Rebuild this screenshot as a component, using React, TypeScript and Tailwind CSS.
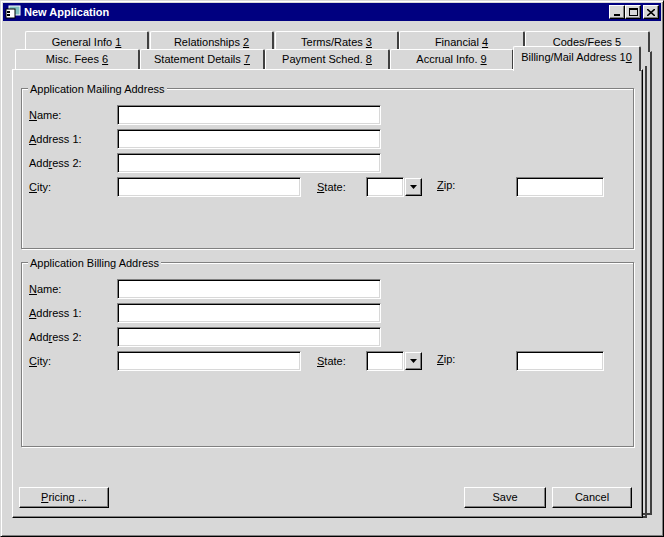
import React from "react";

const U = ({ c }: { c: string }) => <span className="underline">{c}</span>;

const sunken =
  "h-[20px] bg-white border-t border-l border-t-[#808080] border-l-[#808080] border-r border-b border-r-white border-b-white shadow-[inset_1px_1px_0_#000,inset_-1px_-1px_0_#d8d8d8]";
const raised =
  "bg-[#d8d8d8] border-t border-l border-t-white border-l-white border-r border-b border-r-black border-b-black shadow-[inset_-1px_-1px_0_#808080]";

function Tab({ x, y, w, h, children, sel }: { x: number; y: number; w: number; h: number; children: React.ReactNode; sel?: boolean }) {
  return (
    <div
      className={`absolute flex items-center justify-center bg-[#d8d8d8] border-t border-l border-white border-r-2 border-r-[#404040] rounded-tr-[2px] rounded-tl-[2px] ${sel ? "z-20 pb-[4px]" : "z-0"}`}
      style={{ left: x, top: y, width: w, height: h }}
    >
      <span>{children}</span>
    </div>
  );
}

function Row({ label }: { label: React.ReactNode }) {
  return (
    <div className="flex items-center h-[20px] mb-[4px]">
      <div className="w-[88px]">{label}</div>
      <div className={`${sunken} w-[264px]`} />
    </div>
  );
}

function Group({ title, h }: { title: string; h: number }) {
  return (
    <div className="relative mx-[8px] border border-[#808080] shadow-[1px_1px_0_#fff,inset_1px_1px_0_#fff]" style={{ height: h }}>
      <div className="absolute left-[6px] top-[-8px] bg-[#d8d8d8] px-[2px]">{title}</div>
      <div className="pt-[16px] pl-[7px]">
        <Row label={<><U c="N" />ame:</>} />
        <Row label={<><U c="A" />ddress 1:</>} />
        <Row label={<>Add<U c="r" />ess 2:</>} />
        <div className="flex items-center h-[20px]">
          <div className="w-[88px]"><U c="C" />ity:</div>
          <div className={`${sunken} w-[184px]`} />
          <div className="w-[49px] pl-[16px]"><U c="S" />tate:</div>
          <div className={`${sunken} w-[38px] ml-[16px]`} />
          <div className={`${raised} w-[17px] h-[18px] ml-[1px] flex items-center justify-center`}>
            <svg width="7" height="4" viewBox="0 0 7 4"><path d="M0 0h7L3.5 4z" fill="#000" /></svg>
          </div>
          <div className="w-[94px] pl-[15px] self-start"><U c="Z" />ip:</div>
          <div className={`${sunken} w-[88px]`} />
        </div>
      </div>
    </div>
  );
}

export default function App() {
  return (
    <div
      className="w-[664px] h-[537px] bg-[#d8d8d8] text-[11px] text-black border border-t-[#d8d8d8] border-l-[#d8d8d8] border-r-black border-b-black shadow-[inset_1px_1px_0_#fff,inset_-1px_-1px_0_#808080] p-[2px] flex flex-col"
      style={{ fontFamily: '"Liberation Sans", Arial, sans-serif' }}
    >
      <div className="h-[18px] bg-[#000080] flex items-center px-[2px] shrink-0">
        <svg width="16" height="14" viewBox="0 0 16 14" className="mr-[3px]">
          <rect x="4" y="1" width="11" height="9" fill="#80c0c0" stroke="#fff" strokeWidth="1" />
          <rect x="1" y="4" width="9" height="9" fill="#fff" stroke="#000" />
          <rect x="2" y="6" width="3" height="2" fill="#000" />
          <rect x="2" y="9" width="3" height="2" fill="#000" />
        </svg>
        <span className="text-white font-bold text-[11px] flex-1">New Application</span>
        {["min", "max", "x"].map((k) => (
          <div key={k} className={`${raised} w-[16px] h-[14px] flex items-center justify-center ${k === "x" ? "ml-[2px]" : ""}`}>
            {k === "min" && <div className="w-[6px] h-[2px] bg-black mt-[6px]" />}
            {k === "max" && <div className="w-[9px] h-[8px] border border-black border-t-2" />}
            {k === "x" && (
              <svg width="8" height="7" viewBox="0 0 8 7"><path d="M0 0L8 7M8 0L0 7" stroke="#000" strokeWidth="1.6" /></svg>
            )}
          </div>
        ))}
      </div>
      <div className="relative flex-1">
        <div className="absolute left-[20px] top-[30px] w-[629px] h-[464px] border-r-2 border-b-2 border-r-[#404040] border-b-[#404040] border-t border-white" />
        <div className="absolute left-[15px] top-[45px] w-[629px] h-[452px] border-r-2 border-b-2 border-r-[#404040] border-b-[#404040]" />
        <Tab x={22} y={10} w={124} h={21}>General Info <U c="1" /></Tab>
        <Tab x={147} y={10} w={124} h={21}>Relationships <U c="2" /></Tab>
        <Tab x={272} y={10} w={124} h={21}>Terms/Rates <U c="3" /></Tab>
        <Tab x={396} y={10} w={126} h={21}>Financial <U c="4" /></Tab>
        <Tab x={522} y={10} w={125} h={21}>Codes/Fees 5</Tab>
        <Tab x={12} y={28} w={125} h={20}>Misc. Fees <U c="6" /></Tab>
        <Tab x={137} y={28} w={125} h={20}>Statement Details <U c="7" /></Tab>
        <Tab x={262} y={28} w={125} h={20}>Payment Sched. <U c="8" /></Tab>
        <Tab x={387} y={28} w={124} h={20}>Accrual Info. <U c="9" /></Tab>
        <Tab x={510} y={25} w={128} h={25} sel>Billing/Mail Address 1<U c="0" /></Tab>
        <div className="absolute z-10 left-[9px] top-[48px] w-[631px] h-[449px] bg-[#d8d8d8] border-t border-l border-white border-r border-b border-r-black border-b-black shadow-[inset_-1px_-1px_0_#808080] flex flex-col">
          <div className="h-[18px]" />
          <Group title="Application Mailing Address" h={161} />
          <div className="h-[13px]" />
          <Group title="Application Billing Address" h={185} />
          <div className="flex items-center pl-[6px] pr-[10px] mt-[40px]">
            <div className={`${raised} w-[90px] h-[21px] flex items-center justify-center`}><span><U c="P" />ricing ...</span></div>
            <div className="flex-1" />
            <div className={`${raised} w-[82px] h-[21px] flex items-center justify-center mr-[6px]`}>Save</div>
            <div className={`${raised} w-[80px] h-[21px] flex items-center justify-center`}>Cancel</div>
          </div>
        </div>
      </div>
    </div>
  );
}
